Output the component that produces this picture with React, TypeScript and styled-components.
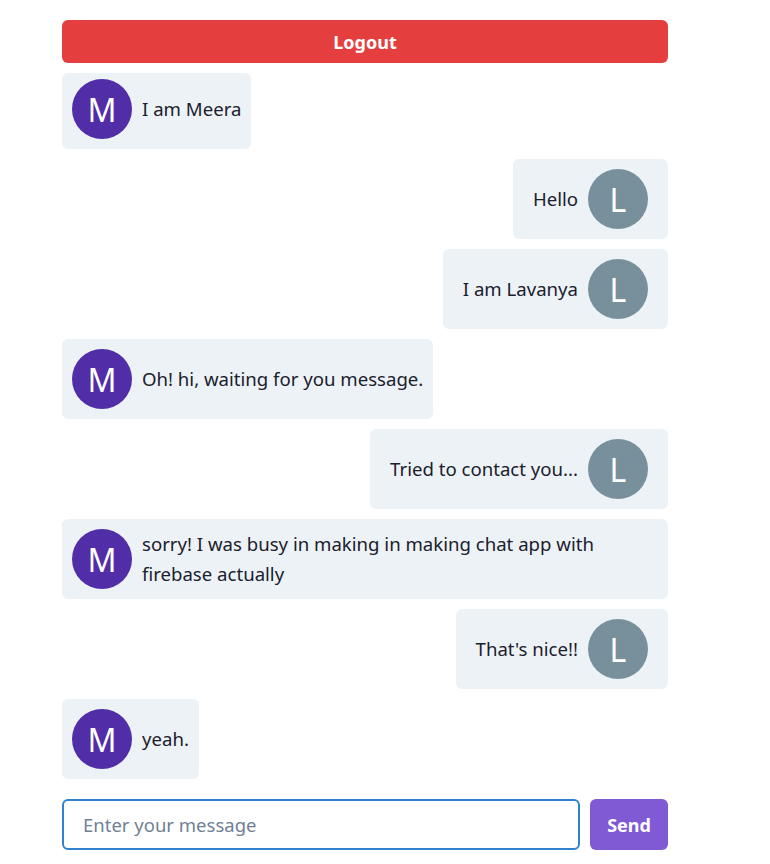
import React from "react";
import styled, { createGlobalStyle } from "styled-components";

const Global = createGlobalStyle`
  html, body { margin: 0; padding: 0; background: #ffffff; }
  body { font-family: "Noto Sans", "Open Sans", sans-serif; color: #1a202c; }
  * { box-sizing: border-box; }
`;

const Page = styled.div`
  width: 606px;
  margin: 20px 0 0 62px;
  display: flex;
  flex-direction: column;
`;

const LogoutButton = styled.button`
  height: 43px;
  width: 100%;
  border: none;
  border-radius: 6px;
  background: #e53e3e;
  color: #ffffff;
  font-family: "Noto Sans", sans-serif;
  font-weight: 700;
  font-size: 18px;
  cursor: pointer;
`;

const MessageList = styled.div`
  margin-top: 10px;
  display: flex;
  flex-direction: column;
  gap: 10px;
`;

const Bubble = styled.div<{ $mine: boolean; $first?: boolean }>`
  display: flex;
  flex-direction: ${(p) => (p.$mine ? "row-reverse" : "row")};
  align-items: center;
  align-self: ${(p) => (p.$mine ? "flex-end" : "flex-start")};
  gap: 10px;
  min-height: ${(p) => (p.$first ? "76px" : "80px")};
  padding: ${(p) =>
    p.$mine ? "10px 20px" : p.$first ? "6px 10px 10px 10px" : "10px"};
  background: #edf2f7;
  border-radius: 6px;
  max-width: 100%;
`;

const Avatar = styled.div<{ $color: string }>`
  flex: 0 0 60px;
  width: 60px;
  height: 60px;
  border-radius: 50%;
  background: ${(p) => p.$color};
  color: #ffffff;
  display: flex;
  align-items: center;
  justify-content: center;
  font-size: 32px;
  font-weight: 400;
`;

const Text = styled.p`
  margin: 0;
  font-size: 18.6px;
  line-height: 30px;
  color: #1a202c;
`;

const Composer = styled.form`
  margin-top: 20px;
  display: flex;
  gap: 10px;
`;

const Input = styled.input`
  flex: 1;
  height: 51px;
  border: 2px solid #3182ce;
  border-radius: 6px;
  padding: 0 19px;
  font-family: "Noto Sans", sans-serif;
  font-size: 18.5px;
  color: #1a202c;
  outline: none;
  &::placeholder { color: #718096; }
`;

const SendButton = styled.button`
  width: 78px;
  height: 51px;
  border: none;
  border-radius: 6px;
  background: #805ad5;
  color: #ffffff;
  font-family: "Noto Sans", sans-serif;
  font-weight: 700;
  font-size: 18px;
`;

type Msg = { mine: boolean; text: string };

const messages: Msg[] = [
  { mine: false, text: "I am Meera" },
  { mine: true, text: "Hello" },
  { mine: true, text: "I am Lavanya" },
  { mine: false, text: "Oh! hi, waiting for you message." },
  { mine: true, text: "Tried to contact you..." },
  { mine: false, text: "sorry! I was busy in making in making chat app with firebase actually" },
  { mine: true, text: "That's nice!!" },
  { mine: false, text: "yeah." },
];

export default function App() {
  return (
    <>
      <Global />
      <Page>
        <LogoutButton>Logout</LogoutButton>
        <MessageList>
          {messages.map((m, i) => (
            <Bubble key={i} $mine={m.mine} $first={i === 0}>
              <Avatar $color={m.mine ? "#78909c" : "#512da8"}>{m.mine ? "L" : "M"}</Avatar>
              <Text>{m.text}</Text>
            </Bubble>
          ))}
        </MessageList>
        <Composer onSubmit={(e) => e.preventDefault()}>
          <Input placeholder="Enter your message" />
          <SendButton type="submit">Send</SendButton>
        </Composer>
      </Page>
    </>
  );
}
